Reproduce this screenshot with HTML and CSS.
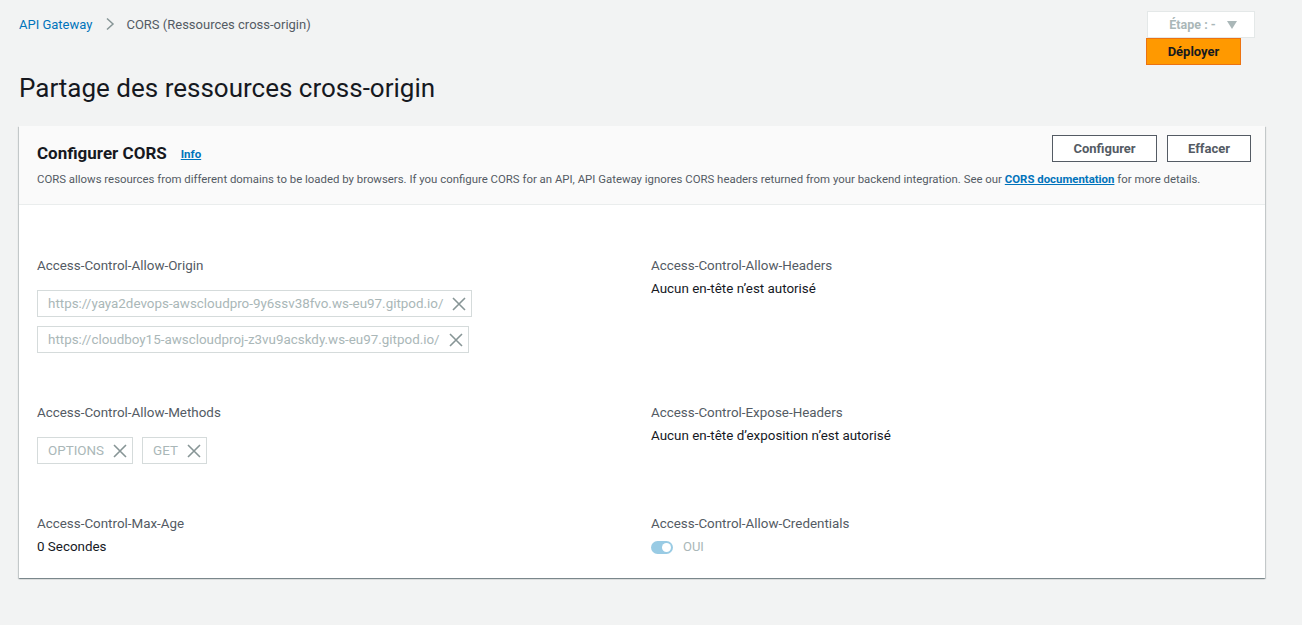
FILE: index.html
```html
<!DOCTYPE html>
<html lang="fr">
<head>
<meta charset="utf-8">
<title>CORS</title>
<link rel="stylesheet" href="styles.css">
</head>
<body>
<div class="page">
  <div class="topbar">
    <nav class="crumbs">
      <a class="crumb-link" href="#">API Gateway</a>
      <svg class="crumb-sep" width="10" height="14" viewBox="0 0 10 14"><path d="M2 1.5 L8 7 L2 12.5" fill="none" stroke="#879596" stroke-width="1.5"/></svg>
      <span class="crumb-current">CORS (Ressources cross-origin)</span>
    </nav>
    <div class="actions">
      <div class="stage-select"><span>Étape : -</span><svg width="10" height="8" viewBox="0 0 10 8"><path d="M0 0 H10 L5 8 Z" fill="#aab7b8"/></svg></div>
      <button class="btn-deploy">Déployer</button>
    </div>
  </div>
  <h1 class="page-title">Partage des ressources cross-origin</h1>

  <section class="panel">
    <header class="panel-head">
      <div class="head-row">
        <h2 class="panel-title">Configurer CORS <a class="info" href="#">Info</a></h2>
        <div class="head-btns">
          <button class="btn btn-conf">Configurer</button>
          <button class="btn btn-clear">Effacer</button>
        </div>
      </div>
      <p class="panel-desc">CORS allows resources from different domains to be loaded by browsers. If you configure CORS for an API, API Gateway ignores CORS headers returned from your backend integration. See our <a href="#" class="doc-link">CORS documentation</a> for more details.</p>
    </header>
    <div class="panel-body">
      <div class="field">
        <div class="label">Access-Control-Allow-Origin</div>
        <div class="chips-col">
          <div class="chip chip-url"><span>https://yaya2devops-awscloudpro-9y6ssv38fvo.ws-eu97.gitpod.io/</span><svg class="x" width="14" height="14" viewBox="0 0 14 14"><path d="M1 1 L13 13 M13 1 L1 13" stroke="#879596" stroke-width="1.6"/></svg></div>
          <div class="chip chip-url"><span>https://cloudboy15-awscloudproj-z3vu9acskdy.ws-eu97.gitpod.io/</span><svg class="x" width="14" height="14" viewBox="0 0 14 14"><path d="M1 1 L13 13 M13 1 L1 13" stroke="#879596" stroke-width="1.6"/></svg></div>
        </div>
      </div>
      <div class="field">
        <div class="label">Access-Control-Allow-Headers</div>
        <div class="value">Aucun en-tête n’est autorisé</div>
      </div>
      <div class="field">
        <div class="label">Access-Control-Allow-Methods</div>
        <div class="chips-row">
          <div class="chip"><span>OPTIONS</span><svg class="x" width="14" height="14" viewBox="0 0 14 14"><path d="M1 1 L13 13 M13 1 L1 13" stroke="#879596" stroke-width="1.6"/></svg></div>
          <div class="chip"><span>GET</span><svg class="x" width="14" height="14" viewBox="0 0 14 14"><path d="M1 1 L13 13 M13 1 L1 13" stroke="#879596" stroke-width="1.6"/></svg></div>
        </div>
      </div>
      <div class="field">
        <div class="label">Access-Control-Expose-Headers</div>
        <div class="value">Aucun en-tête d’exposition n’est autorisé</div>
      </div>
      <div class="field">
        <div class="label">Access-Control-Max-Age</div>
        <div class="value">0 Secondes</div>
      </div>
      <div class="field">
        <div class="label">Access-Control-Allow-Credentials</div>
        <div class="value toggle-row"><span class="toggle"><span class="knob"></span></span><span class="oui">OUI</span></div>
      </div>
    </div>
  </section>
</div>
</body>
</html>
```

FILE: styles.css
```css
* { box-sizing: border-box; }
html, body { margin: 0; padding: 0; }
body {
  background: #f2f3f3;
  font-family: Roboto, "Noto Sans", "Liberation Sans", sans-serif;
  color: #16191f;
  font-size: 13px;
  width: 1302px;
  height: 625px;
  overflow: hidden;
}
.page { padding: 11px 37px 0 19px; }
.topbar { display: flex; justify-content: space-between; align-items: flex-start; }
.crumbs { display: flex; align-items: center; margin-top: 3px; height: 20px; font-size: 13px; }
.crumb-link { color: #0073bb; text-decoration: none; }
.crumb-sep { margin: 0 11px 0 13px; }
.crumb-current { color: #545b64; }
.actions { display: flex; flex-direction: column; align-items: flex-start; margin-right: 10px; }
.stage-select {
  width: 108px; height: 27px; background: #fff; border: 1px solid #e4e8e8;
  display: flex; align-items: center; justify-content: center; gap: 11px;
  color: #aab7b8; font-weight: 700; font-size: 12.5px; padding-left: 4px;
}
.btn-deploy {
  margin-left: -1px; width: 95px; height: 27px; background: #ff9900; border: 1px solid #ec7211;
  font-family: inherit; font-weight: 700; font-size: 13px; color: #16191f; padding: 0; cursor: pointer;
}
.page-title { margin: 7px 0 0; font-size: 26px; font-weight: 400; line-height: 32px; color: #16191f; }
.panel {
  margin-top: 22px; background: #fff;
  box-shadow: 0 1px 1px 0 rgba(0,28,36,.3), 1px 1px 1px 0 rgba(0,28,36,.15), -1px 1px 1px 0 rgba(0,28,36,.15);
}
.panel-head {
  background: #fafafa; border-bottom: 1px solid #eaeded;
  padding: 9px 14px 17px 18px;
}
.head-row { display: flex; justify-content: space-between; align-items: flex-start; }
.panel-title { margin: 4px 0 0; font-size: 17px; font-weight: 700; line-height: 24px; display: flex; align-items: center; }
.info { font-size: 11.5px; color: #0073bb; margin-left: 14px; text-decoration: underline; font-weight: 700; padding-top: 3px; }
.panel-desc { margin: 5px 0 0; font-size: 11.4px; line-height: 16px; color: #545b64; white-space: nowrap; }
.doc-link { color: #0073bb; font-weight: 700; text-decoration: underline; }
.head-btns { display: flex; gap: 10px; }
.btn {
  height: 27px; background: #fff; border: 1px solid #545b64; color: #545b64;
  font-family: inherit; font-weight: 700; font-size: 13px; padding: 0; cursor: pointer;
}
.btn-conf { width: 105px; }
.btn-clear { width: 84px; }
.panel-body {
  display: grid; grid-template-columns: 614px 1fr; row-gap: 50px;
  padding: 51px 18px 21px 18px;
}
.label { font-size: 13.4px; line-height: 20px; color: #545b64; }
.value { margin-top: 3px; font-size: 13.4px; line-height: 20px; color: #16191f; }
.chips-col { margin-top: 14px; display: flex; flex-direction: column; align-items: flex-start; gap: 9px; }
.chips-row { margin-top: 14px; display: flex; gap: 9px; }
.chip {
  height: 27px; border: 1px solid #d5dbdb; background: #fff;
  display: flex; align-items: center; padding: 0 5px 0 10px; gap: 9px;
  color: #aab7b8; font-size: 13.4px;
}
.chip .x { flex: none; }
.toggle-row { display: flex; align-items: center; gap: 10px; }
.toggle { width: 22px; height: 13px; border-radius: 7px; background: #99cbe4; position: relative; display: inline-block; }
.knob { position: absolute; right: 2px; top: 2px; width: 9px; height: 9px; border-radius: 50%; background: #fff; }
.oui { color: #aab7b8; font-size: 13px; }
```
